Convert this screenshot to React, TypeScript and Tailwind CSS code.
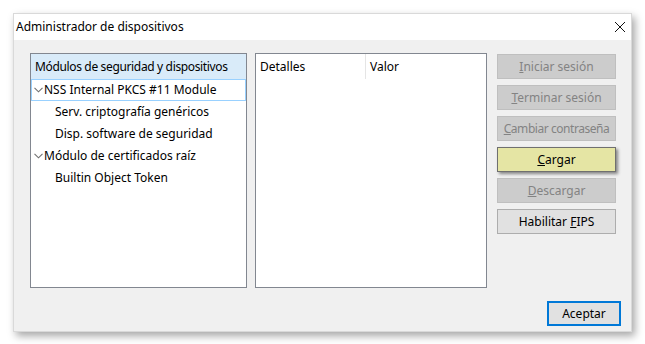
import React from "react";

const font = { fontFamily: '"Noto Sans", "Open Sans", sans-serif' };

function Chevron() {
  return (
    <svg width="9" height="6" viewBox="0 0 9 6" className="shrink-0">
      <polyline points="0.5,0.8 4.5,4.8 8.5,0.8" fill="none" stroke="#707070" strokeWidth="1.1" />
    </svg>
  );
}

function Btn({
  children,
  variant,
  tight,
}: {
  children: React.ReactNode;
  variant: "disabled" | "hover" | "normal";
  tight?: boolean;
}) {
  const cls =
    variant === "disabled"
      ? "bg-[#cccccc] border-[#bfbfbf] text-[#838383]"
      : variant === "hover"
      ? "bg-[#e5e5a4] border-[#6f6f6f] text-black shadow-[2px_2px_3px_rgba(0,0,0,0.45)]"
      : "bg-[#e1e1e1] border-[#adadad] text-black";
  return (
    <div
      className={`h-[25px] w-[119px] border flex items-center justify-center text-[12px] whitespace-nowrap ${
        tight ? "tracking-[-0.45px]" : ""
      } ${cls}`}
    >
      {children}
    </div>
  );
}

export default function App() {
  return (
    <div className="w-[645px] h-[344px] bg-white pt-[13px] pl-[13px]" style={font}>
      <div className="w-[619px] h-[319px] bg-[#f0f0f0] border border-[#d9d9d9] shadow-[3px_4px_8px_rgba(0,0,0,0.35)] flex flex-col">
        <div className="h-[26px] bg-white flex items-center justify-between pl-[2px] pr-[4px] shrink-0">
          <span className="text-[12px] text-black leading-none">Administrador de dispositivos</span>
          <svg width="12" height="12" viewBox="0 0 12 12" className="mr-[1px]">
            <path d="M1 1 L11 11 M11 1 L1 11" stroke="#111" strokeWidth="1" />
          </svg>
        </div>
        <div className="flex-1 flex flex-col">
          <div className="flex pt-[13px] pl-[16px]">
            <div className="w-[217px] h-[235px] bg-white border border-[#828790] flex flex-col">
              <div className="h-[25px] bg-[#d9ebf9] flex items-center pl-[4px] text-[12px] text-black shrink-0 tracking-[-0.35px] whitespace-nowrap">
                Módulos de seguridad y dispositivos
              </div>
              <div className="h-[22px] border border-[#99d1ff] flex items-center pl-[2px] gap-[1px] text-[12px] text-black">
                <Chevron />
                <span>NSS Internal PKCS #11 Module</span>
              </div>
              <div className="h-[22px] flex items-center pl-[24px] text-[12px] text-black">
                Serv. criptografía genéricos
              </div>
              <div className="h-[22px] flex items-center pl-[24px] text-[12px] text-black">
                Disp. software de seguridad
              </div>
              <div className="h-[22px] flex items-center pl-[3px] gap-[1px] text-[12px] text-black">
                <Chevron />
                <span>Módulo de certificados raíz</span>
              </div>
              <div className="h-[22px] flex items-center pl-[24px] text-[12px] text-black">
                Builtin Object Token
              </div>
            </div>
            <div className="ml-[8px] w-[232px] h-[235px] bg-white border border-[#828790] flex flex-col">
              <div className="h-[25px] flex text-[12px] text-black shrink-0">
                <div className="w-[110px] border-r border-[#e5e5e5] flex items-center pl-[4px]">Detalles</div>
                <div className="flex-1 flex items-center pl-[4px]">Valor</div>
              </div>
            </div>
            <div className="ml-[10px] mt-[1px] flex flex-col gap-[6px]">
              <Btn variant="disabled"><span><u>I</u>niciar sesión</span></Btn>
              <Btn variant="disabled"><span><u>T</u>erminar sesión</span></Btn>
              <Btn variant="disabled" tight><span><u>C</u>ambiar contraseña</span></Btn>
              <Btn variant="hover"><span><u>C</u>argar</span></Btn>
              <Btn variant="disabled"><span><u>D</u>escargar</span></Btn>
              <Btn variant="normal"><span>Habilitar <u>F</u>IPS</span></Btn>
            </div>
          </div>
          <div className="flex justify-end pr-[10px] mt-[13px]">
            <div className="w-[74px] h-[25px] bg-[#e1e1e1] border-2 border-[#0078d7] flex items-center justify-center text-[12px] text-black">
              Aceptar
            </div>
          </div>
        </div>
      </div>
    </div>
  );
}
